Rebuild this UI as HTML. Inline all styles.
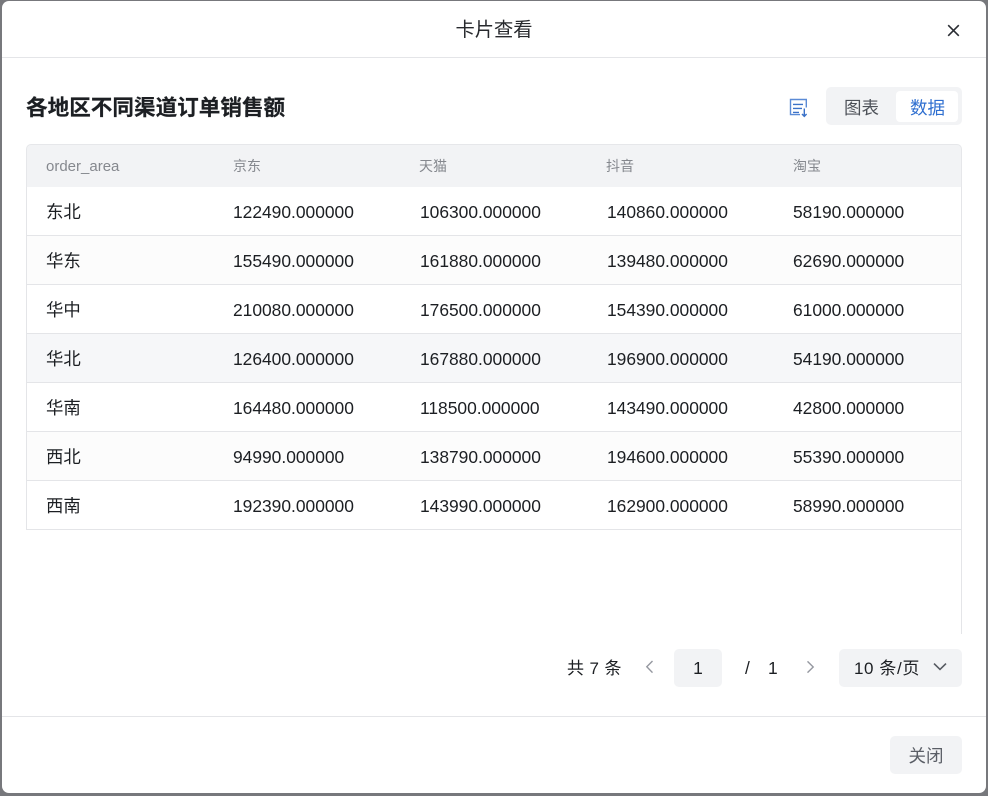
<!DOCTYPE html>
<html lang="zh">
<head>
<meta charset="utf-8">
<style>
html,body{margin:0;padding:0;width:988px;height:796px;overflow:hidden;background:#77787c;font-family:"Liberation Sans","Noto Sans CJK SC",sans-serif;color:#1c1f23}
*{box-sizing:border-box}
.a{position:absolute;white-space:nowrap}
#dlg{position:absolute;left:2px;top:1px;width:984px;height:792px;background:#fff;border-radius:7px;overflow:hidden}
.hl{position:absolute;height:1px;background:#e4e5e8}
.cell{position:absolute;font-size:17.4px;line-height:20px;white-space:nowrap;color:#1c1f23}
.th{position:absolute;font-size:14px;line-height:20px;white-space:nowrap;color:#85888e}
.row{position:absolute;left:26px;width:936px;height:49px;border-bottom:1px solid #e4e5e8}
</style>
</head>
<body>
<div id="dlg"></div>
<div class="a" style="left:0;top:0;width:988px;height:796px">
  <div class="a" style="left:2px;width:984px;top:20px;text-align:center;font-size:19.3px;line-height:22px;color:#27292d">卡片查看</div>
  <svg class="a" style="left:946px;top:23px" width="15" height="15" viewBox="0 0 15 15"><path d="M2.2 2.2L12.8 12.8M12.8 2.2L2.2 12.8" stroke="#2a2d33" stroke-width="1.6" fill="none"/></svg>
  <div class="hl" style="left:2px;width:984px;top:57px"></div>

  <div class="a" style="left:26px;top:94px;font-size:21.6px;line-height:28px;font-weight:700;color:#1c1f23;-webkit-text-stroke:.2px #1c1f23">各地区不同渠道订单销售额</div>

  <svg class="a" style="left:788px;top:97px" width="22" height="22" viewBox="0 0 22 22" fill="none"><path d="M18.3 10.5V2.5H2.5V17.6H12" stroke="#5b8bd6" stroke-width="1.4"/><path d="M5 7.4H15M5 11.4H14M5 15.4H11" stroke="#3b72c8" stroke-width="1.4"/><path d="M16.3 11.5V19.3M14 17L16.3 19.4L18.6 17" stroke="#3b72c8" stroke-width="1.4"/></svg>
  <div class="a" style="left:826px;top:87px;width:136px;height:38px;background:#f2f3f5;border-radius:5px"></div>
  <div class="a" style="left:896px;top:91px;width:62px;height:31px;background:#fff;border-radius:4px"></div>
  <div class="a" style="left:844px;top:97px;font-size:17.5px;line-height:22px;color:#4d5158">图表</div>
  <div class="a" style="left:910px;top:97px;font-size:17.5px;line-height:22px;color:#2f6fd0">数据</div>

  <div class="a" style="left:26px;top:144px;width:936px;height:43px;background:#f2f3f5;border:1px solid #e6e7ea;border-bottom:0;border-radius:5px 5px 0 0"></div>

  <div class="row" style="top:187px;background:#fff"></div>
  <div class="row" style="top:236px;background:#fcfcfc"></div>
  <div class="row" style="top:285px;background:#fff"></div>
  <div class="row" style="top:334px;background:#f6f7f9"></div>
  <div class="row" style="top:383px;background:#fff"></div>
  <div class="row" style="top:432px;background:#fcfcfc"></div>
  <div class="row" style="top:481px;background:#fff"></div>
  <div class="a" style="left:26px;top:187px;width:1px;height:343px;background:#e4e5e8"></div>
  <div class="a" style="left:961px;top:187px;width:1px;height:447px;background:#e4e5e8"></div>

  <div class="th" style="left:46px;top:157px;font-size:15px">order_area</div>
  <div class="th" style="left:233px;top:156px">京东</div>
  <div class="th" style="left:419px;top:156px">天猫</div>
  <div class="th" style="left:606px;top:156px">抖音</div>
  <div class="th" style="left:793px;top:156px">淘宝</div>

  <div class="cell" style="left:46px;top:202px">东北</div><div class="cell" style="left:233px;top:202px">122490.000000</div><div class="cell" style="left:420px;top:202px">106300.000000</div><div class="cell" style="left:607px;top:202px">140860.000000</div><div class="cell" style="left:793px;top:202px">58190.000000</div>
  <div class="cell" style="left:46px;top:251px">华东</div><div class="cell" style="left:233px;top:251px">155490.000000</div><div class="cell" style="left:420px;top:251px">161880.000000</div><div class="cell" style="left:607px;top:251px">139480.000000</div><div class="cell" style="left:793px;top:251px">62690.000000</div>
  <div class="cell" style="left:46px;top:300px">华中</div><div class="cell" style="left:233px;top:300px">210080.000000</div><div class="cell" style="left:420px;top:300px">176500.000000</div><div class="cell" style="left:607px;top:300px">154390.000000</div><div class="cell" style="left:793px;top:300px">61000.000000</div>
  <div class="cell" style="left:46px;top:349px">华北</div><div class="cell" style="left:233px;top:349px">126400.000000</div><div class="cell" style="left:420px;top:349px">167880.000000</div><div class="cell" style="left:607px;top:349px">196900.000000</div><div class="cell" style="left:793px;top:349px">54190.000000</div>
  <div class="cell" style="left:46px;top:398px">华南</div><div class="cell" style="left:233px;top:398px">164480.000000</div><div class="cell" style="left:420px;top:398px">118500.000000</div><div class="cell" style="left:607px;top:398px">143490.000000</div><div class="cell" style="left:793px;top:398px">42800.000000</div>
  <div class="cell" style="left:46px;top:447px">西北</div><div class="cell" style="left:233px;top:447px">94990.000000</div><div class="cell" style="left:420px;top:447px">138790.000000</div><div class="cell" style="left:607px;top:447px">194600.000000</div><div class="cell" style="left:793px;top:447px">55390.000000</div>
  <div class="cell" style="left:46px;top:496px">西南</div><div class="cell" style="left:233px;top:496px">192390.000000</div><div class="cell" style="left:420px;top:496px">143990.000000</div><div class="cell" style="left:607px;top:496px">162900.000000</div><div class="cell" style="left:793px;top:496px">58990.000000</div>

  <div class="a" style="left:567px;top:658px;font-size:17px;line-height:22px;word-spacing:.8px">共 7 条</div>
  <svg class="a" style="left:642px;top:658px" width="14" height="18" viewBox="0 0 14 18" fill="none"><path d="M10.5 3L4.8 8.8L10.5 14.6" stroke="#9598a0" stroke-width="1.4"/></svg>
  <div class="a" style="left:674px;top:649px;width:48px;height:38px;background:#f2f3f5;border-radius:5px;text-align:center;font-size:17.4px;line-height:39px">1</div>
  <div class="a" style="left:745px;top:657px;font-size:17.4px;line-height:22px">/</div>
  <div class="a" style="left:768px;top:657px;font-size:17.4px;line-height:22px">1</div>
  <svg class="a" style="left:803px;top:658px" width="14" height="18" viewBox="0 0 14 18" fill="none"><path d="M4.5 3.4L10.2 9L4.5 14.6" stroke="#9598a0" stroke-width="1.4"/></svg>
  <div class="a" style="left:839px;top:649px;width:123px;height:38px;background:#f2f3f5;border-radius:5px"></div>
  <div class="a" style="left:854px;top:658px;font-size:17px;line-height:22px;letter-spacing:.6px">10 条/页</div>
  <svg class="a" style="left:932px;top:661px" width="16" height="12" viewBox="0 0 16 12" fill="none"><path d="M2 2.6L8 8.4L14 2.6" stroke="#555960" stroke-width="1.6"/></svg>

  <div class="hl" style="left:2px;width:984px;top:716px"></div>
  <div class="a" style="left:890px;top:736px;width:72px;height:38px;background:#f2f3f5;border-radius:5px;text-align:center;font-size:17.5px;line-height:40px;color:#5a5e66">关闭</div>
</div>
</body>
</html>
